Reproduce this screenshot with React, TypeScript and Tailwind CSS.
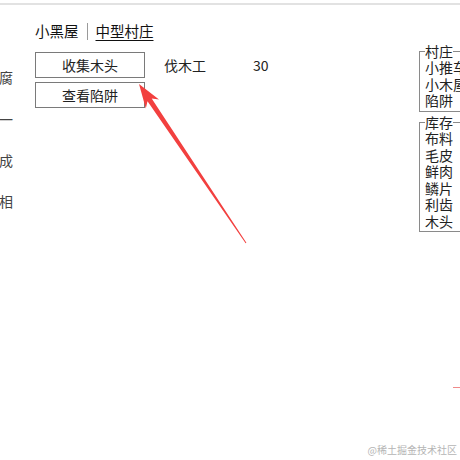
import React from "react";

const font = { fontFamily: '"Noto Sans CJK SC", "Noto Sans", sans-serif' };

function Fieldset({ legend, items, className }: { legend: string; items: string[]; className?: string }) {
  return (
    <fieldset className={"w-[70px] border border-[#8a8a8a] pl-[5px] pr-0 pt-0 pb-[2px] m-0 " + (className ?? "")}>
      <legend className="px-0 text-[14px] leading-[16.5px] text-[#222]">{legend}</legend>
      {items.map((it) => (
        <div key={it} className="text-[14px] leading-[16.5px] text-[#222] whitespace-nowrap">
          {it}
        </div>
      ))}
    </fieldset>
  );
}

export default function App() {
  return (
    <div className="relative w-[460px] h-[460px] overflow-hidden bg-white" style={font}>
      <div className="mt-[3px] h-[2px] bg-[#e2e2e2]" />
      <div className="flex items-start">
        {/* left clipped column */}
        <div className="ml-[-1px] w-[14px] mt-[52.4px] flex flex-col text-[14px] leading-[41.3px] text-[#444] overflow-visible">
          <span>腐</span>
          <span>一</span>
          <span>成</span>
          <span>相</span>
        </div>
        {/* main column */}
        <div className="ml-[22px] w-[384px] shrink-0 mt-[15px]">
          <div className="flex items-center h-[22px] text-[14.5px] text-[#111]">
            <span>小黑屋</span>
            <span className="mx-[8px] w-px h-[17px] bg-[#9a9a9a]" />
            <span className="underline underline-offset-[3px]">中型村庄</span>
          </div>
          <div className="mt-[10px] flex flex-col gap-[4px]">
            <div className="flex items-center">
              <button className="w-[110px] h-[26px] border border-[#7a7a7a] bg-white text-[14px] leading-none text-[#222]">
                收集木头
              </button>
              <span className="ml-[19px] w-[89px] text-[14px] text-[#222]">伐木工</span>
              <span className="text-[14px] text-[#222]">30</span>
            </div>
            <div className="flex items-center">
              <button className="w-[110px] h-[26px] border border-[#7a7a7a] bg-white text-[14px] leading-none text-[#222]">
                查看陷阱
              </button>
            </div>
          </div>
        </div>
        {/* right column */}
        <div className="shrink-0 mt-[37.75px] flex flex-col gap-[2px]">
          <Fieldset legend="村庄" items={["小推车", "小木屋", "陷阱"]} />
          <Fieldset legend="库存" items={["布料", "毛皮", "鲜肉", "鳞片", "利齿", "木头"]} />
        </div>
      </div>

      {/* annotation arrow */}
      <svg className="absolute left-0 top-0 pointer-events-none" width="460" height="460" viewBox="0 0 460 460">
        <polygon
          points="139,84 159,99.4 151.7,98.4 246.4,242.7 245.6,243.3 147.5,101.2 145.8,108.4"
          fill="#f2403f"
        />
      </svg>
      <div className="absolute left-[453px] top-[387px] w-[7px] h-px bg-[#f08a8a]" />
      <div className="absolute right-[3px] top-[443px] text-[10px] leading-[14px] text-[#b5b5b5]">@稀土掘金技术社区</div>
    </div>
  );
}
